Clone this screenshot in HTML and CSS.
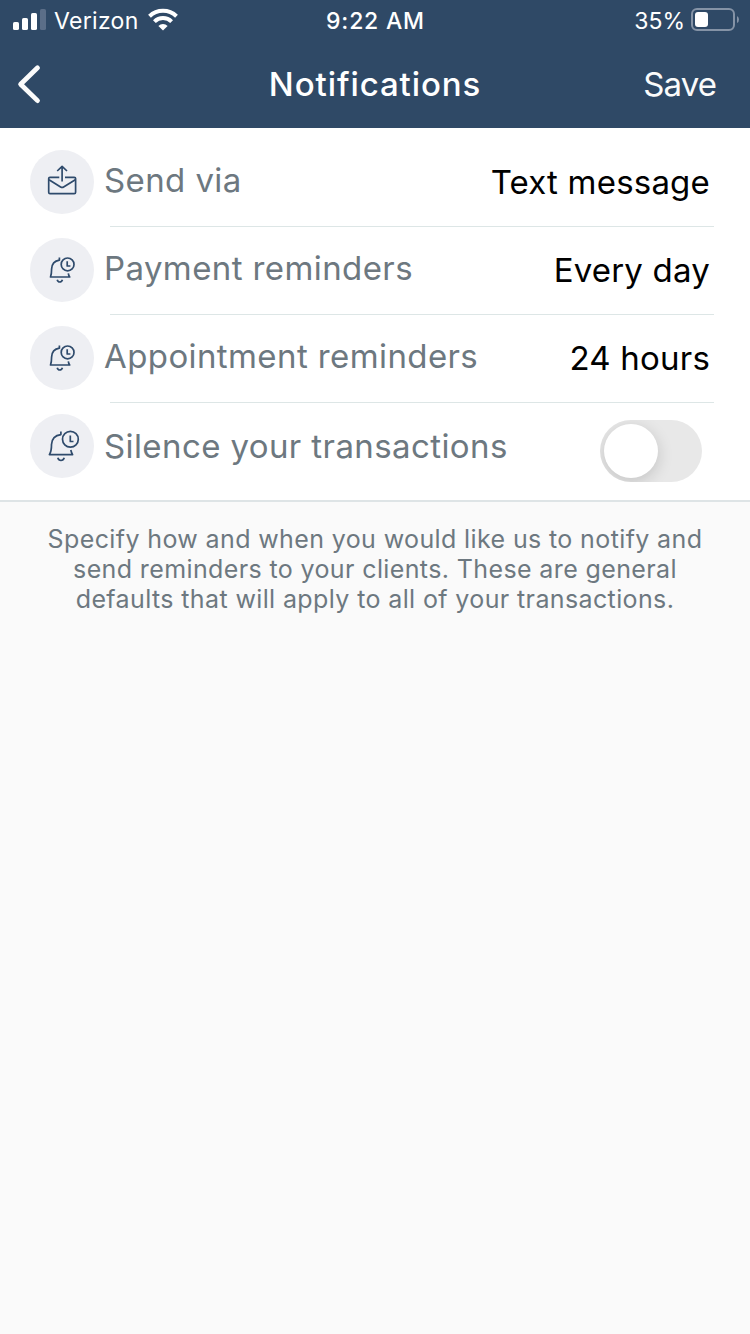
FILE: index.html
```html
<!DOCTYPE html>
<html lang="en">
<head>
  <meta charset="UTF-8" />
  <meta name="viewport" content="width=device-width, initial-scale=1.0"/>
  <title>Notifications</title>
  <link rel="stylesheet" href="styles.css">
</head>
<body>
  <header>
    <div class="status-bar">
      <div class="carrier">
        <svg class="signal" width="34" height="22" viewBox="0 0 34 22">
          <rect x="0" y="13" width="6" height="8" rx="1.6" fill="#fff"/>
          <rect x="9" y="9" width="6" height="12" rx="1.6" fill="#fff"/>
          <rect x="18" y="4" width="6" height="17" rx="1.6" fill="#fff"/>
          <rect x="27" y="0" width="6" height="21" rx="1.6" fill="#5b6e88"/>
        </svg>
        <span class="carrier-name">Verizon</span>
        <svg class="wifi" width="30" height="23" viewBox="0 0 30 23">
          <g fill="none" stroke="#fff" stroke-width="4">
            <path d="M1.5 8.2 A19.5 19.5 0 0 1 28.5 8.2"/>
            <path d="M6.4 13.6 A12.3 12.3 0 0 1 23.6 13.6"/>
          </g>
          <path d="M15 22.5 L10.4 17.9 A6.6 6.6 0 0 1 19.6 17.9 Z" fill="#fff"/>
        </svg>
      </div>
      <div class="time">9:22 AM</div>
      <div class="battery">
        <span class="percent">35%</span>
        <svg width="49" height="24" viewBox="0 0 49 24">
          <rect x="1" y="1" width="42" height="21" rx="5" fill="none" stroke="#8593a6" stroke-width="2"/>
          <rect x="4" y="4" width="13" height="15" rx="3" fill="#fff"/>
          <path d="M46 8 Q48 9 48 11.5 Q48 14 46 15 Z" fill="#8593a6"/>
        </svg>
      </div>
    </div>
    <nav class="nav-bar">
      <a class="back" href="#" aria-label="Back">
        <svg width="24" height="40" viewBox="0 0 24 40">
          <path d="M20.5 3.8 L3.6 20.2 L20.5 36.6" fill="none" stroke="#fbfbfb" stroke-width="4.8" stroke-linecap="round" stroke-linejoin="round"/>
        </svg>
      </a>
      <h1>Notifications</h1>
      <a class="save" href="#">Save</a>
    </nav>
  </header>

  <ul class="settings">
    <li>
      <svg class="icon" viewBox="0 0 64 64">
        <path d="M29.3 27.3 H20 Q18.7 27.3 18.7 28.6 V42.2 Q18.7 43.6 20 43.6 H44.2 Q45.6 43.6 45.6 42.2 V28.6 Q45.6 27.3 44.2 27.3 H35"/>
        <path d="M19 29.7 L30.6 37 Q32.1 37.9 33.6 37 L45.3 29.7"/>
        <path d="M32.1 31.6 V16.6 M27.2 21 L32.1 16.4 L37 21"/>
      </svg>
      <div class="row">
        <span class="label">Send via</span>
        <span class="value">Text message</span>
      </div>
    </li>
    <li>
      <svg class="icon" viewBox="0 0 64 64">
        <g id="bell">
          <path d="M29.4 19.6 V22.2 C24.6 23 21.8 26.2 21.6 31 Q21.6 36 20.5 39 H39.7 Q38.6 37.5 38.3 35.3"/>
          <path d="M27.2 41.8 Q27.8 44 29.8 44 Q31.8 44 32.4 41.8"/>
          <circle cx="37.6" cy="26.4" r="6.4"/>
          <path d="M37.2 23.3 V28 H40.4"/>
        </g>
      </svg>
      <div class="row">
        <span class="label">Payment reminders</span>
        <span class="value">Every day</span>
      </div>
    </li>
    <li>
      <svg class="icon" viewBox="0 0 64 64"><use href="#bell"/></svg>
      <div class="row">
        <span class="label">Appointment reminders</span>
        <span class="value">24 hours</span>
      </div>
    </li>
    <li>
      <svg class="icon" viewBox="0 0 64 64">
        <path d="M30.9 17.6 V20.6 C25.3 21.3 21.8 25 21.5 30.5 Q21.6 37 19.4 40.6 H42.6 Q41.3 38.5 40.8 36"/>
        <path d="M27.8 43.8 Q28.6 46.5 31 46.5 Q33.4 46.5 34.2 43.8"/>
        <circle cx="40.4" cy="25.3" r="7.9"/>
        <path d="M40.3 21.5 V27.5 H43.5"/>
      </svg>
      <div class="row last">
        <span class="label">Silence your transactions</span>
        <span class="toggle" role="switch" aria-checked="false"></span>
      </div>
    </li>
  </ul>

  <p class="hint">
    Specify how and when you would like us to notify and<br>
    send reminders to your clients. These are general<br>
    defaults that will apply to all of your transactions.
  </p>
</body>
</html>
```
FILE: styles.css
```css
* { margin: 0; padding: 0; box-sizing: border-box; }

body {
  min-height: 100vh;
  font-family: 'Inter', sans-serif;
  background: #fafafa;
  color: #000;
}

header {
  height: 128px;
  background: #2f4966;
  color: #fff;
}

.status-bar {
  display: grid;
  grid-template-columns: 1fr auto 1fr;
  align-items: center;
  height: 40px;
  padding: 0 10px 0 13px;
  font-size: 23px;
  white-space: nowrap;
}

.carrier {
  display: flex;
  align-items: center;
}

.carrier-name {
  margin: 2px 9px 0 7px;
  letter-spacing: 0.3px;
}

.wifi {
  margin-bottom: 1px;
}

.time {
  margin: 2px 2px 0 0;
  font-weight: 550;
  letter-spacing: 0.8px;
}

.battery {
  display: flex;
  align-items: center;
  justify-content: flex-end;
  gap: 6px;
}

.percent {
  margin-top: 2px;
}

.nav-bar {
  display: grid;
  grid-template-columns: 1fr auto 1fr;
  align-items: center;
  height: 88px;
  padding: 0 17px;
}

.back {
  display: flex;
}

.nav-bar h1 {
  font-size: 33px;
  font-weight: 550;
  letter-spacing: 0.9px;
}

.save {
  justify-self: end;
  margin-right: 17px;
  font-size: 33px;
  letter-spacing: -0.9px;
  color: #fbfbfb;
  text-decoration: none;
}

.settings {
  list-style: none;
  padding-top: 11px;
  background: #fff;
  border-bottom: 2px solid #dee4e6;
}

.settings li {
  display: flex;
  padding-left: 30px;
}

.icon {
  flex: none;
  width: 64px;
  height: 64px;
  margin-top: 11px;
  border-radius: 50%;
  background: #eeeff3;
  fill: none;
  stroke: #2f4b6c;
  stroke-width: 1.7;
  stroke-linejoin: round;
}

.row {
  flex: 1;
  display: flex;
  justify-content: space-between;
  height: 88px;
  margin: 0 36px 0 16px;
  border-bottom: 1px solid #dde6e6;
  font-size: 33px;
  line-height: 40px;
  white-space: nowrap;
}

.row.last {
  height: 97px;
  border-bottom: none;
}

.label {
  margin: 21px 0 0 -6px;
  color: #6d7880;
  letter-spacing: 0.4px;
}

.last .label {
  margin-top: 23px;
}

.value {
  margin: 23px 4px 0 0;
  letter-spacing: 0.2px;
}

.toggle {
  width: 102px;
  height: 62px;
  margin: 17px 12px 0 0;
  padding: 4px;
  border-radius: 31px;
  background: #e8e8e8;
  overflow: hidden;
}

.toggle::before {
  content: "";
  display: block;
  width: 54px;
  height: 54px;
  border-radius: 50%;
  background: #fff;
  box-shadow: 0 4px 16px rgba(0, 0, 0, 0.16);
}

.hint {
  padding-top: 22px;
  text-align: center;
  font-size: 25px;
  line-height: 30px;
  letter-spacing: 0.38px;
  color: #6d7880;
}
```
